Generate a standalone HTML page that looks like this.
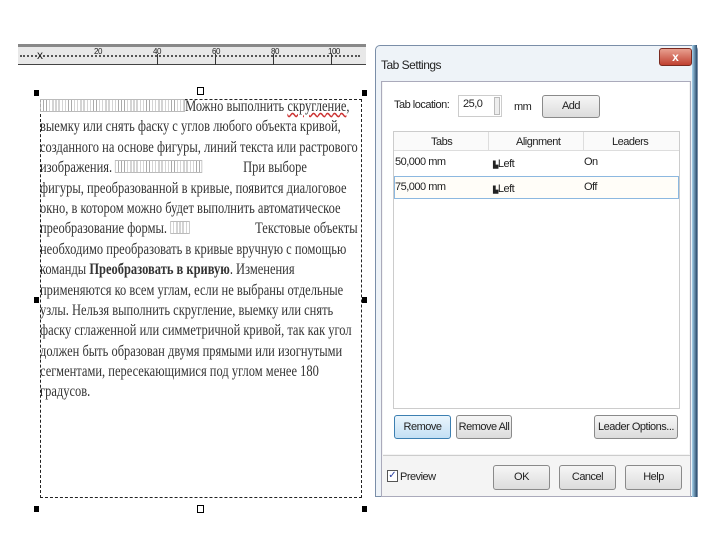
<!DOCTYPE html>
<html><head><meta charset="utf-8"><style>
*{margin:0;padding:0;box-sizing:border-box}
body{width:720px;height:540px;background:#fff;position:relative;overflow:hidden;font-family:"Liberation Sans",sans-serif}
.a{position:absolute}
.txt{font-family:"Liberation Serif","DejaVu Serif",serif;font-size:16px;color:#333;white-space:nowrap;transform:scaleX(0.78);transform-origin:0 0}
.txt div{height:20.4px;line-height:20.4px}
.h{width:5px;height:6px;background:#000}
.btn{position:absolute;border:1px solid #8a8a8a;border-radius:3px;background:linear-gradient(#f6f6f6,#dcdcdc);font-size:11px;color:#222;text-align:center;letter-spacing:-0.5px}
.s{font-size:11px;color:#222;letter-spacing:-0.5px}
.ph{display:inline-block;height:13px;border:1px solid #bbb;background:repeating-linear-gradient(90deg,#fff 0 3px,#aaa 3px 4px);vertical-align:-1px}
</style></head><body>
<!-- ruler -->
<div class="a" style="left:18px;top:44px;width:348px;height:3px;background:#888"></div>
<div class="a" style="left:18px;top:47px;width:348px;height:18px;background:#e8e8e8;border-bottom:1px solid #444"></div>
<div class="a" style="left:20px;top:55px;width:340px;height:2px;border-top:2px dotted #555"></div>
<div class="a s" style="left:94px;top:47px;font-size:8px">20</div>
<div class="a s" style="left:153px;top:47px;font-size:8px">40</div>
<div class="a s" style="left:212px;top:47px;font-size:8px">60</div>
<div class="a s" style="left:271px;top:47px;font-size:8px">80</div>
<div class="a s" style="left:328px;top:47px;font-size:8px">100</div>
<div class="a" style="left:157px;top:54px;width:1px;height:11px;background:#333"></div>
<div class="a" style="left:215px;top:54px;width:1px;height:11px;background:#333"></div>
<div class="a" style="left:273px;top:54px;width:1px;height:11px;background:#333"></div>
<div class="a" style="left:331px;top:54px;width:1px;height:11px;background:#333"></div>
<div class="a s" style="left:37px;top:48px;font-size:12px">x</div>
<!-- frame -->
<div class="a" style="left:40px;top:99px;width:322px;height:399px;border:1px dashed #222"></div>
<div class="a h" style="left:34px;top:90px"></div><div class="a h" style="left:362px;top:90px"></div>
<div class="a h" style="left:34px;top:297px"></div><div class="a h" style="left:362px;top:297px"></div>
<div class="a h" style="left:34px;top:506px"></div><div class="a h" style="left:362px;top:506px"></div>
<div class="a" style="left:197px;top:87px;width:7px;height:8px;border:1px solid #000"></div>
<div class="a" style="left:197px;top:505px;width:7px;height:8px;border:1px solid #000"></div>
<div class="a txt" style="left:40px;top:97px">
<div><span class="ph" style="width:186px"></span>Можно выполнить <u style="text-decoration-color:#c33;text-decoration-style:wavy">скругление</u>,</div>
<div>выемку или снять фаску с углов любого объекта кривой,</div>
<div>созданного на основе фигуры, линий текста или растрового</div>
<div>изображения. <span class="ph" style="width:112px"></span> &nbsp;&nbsp;&nbsp;&nbsp;&nbsp;&nbsp;&nbsp;&nbsp;&nbsp;&nbsp;&nbsp;&nbsp;При выборе</div>
<div>фигуры, преобразованной в кривые, появится диалоговое</div>
<div>окно, в котором можно будет выполнить автоматическое</div>
<div>преобразование формы. <span class="ph" style="width:25px"></span> &nbsp;&nbsp;&nbsp;&nbsp;&nbsp;&nbsp;&nbsp;&nbsp;&nbsp;&nbsp;&nbsp;&nbsp;&nbsp;&nbsp;&nbsp;&nbsp;&nbsp;&nbsp;&nbsp;&nbsp;Текстовые объекты</div>
<div>необходимо преобразовать в кривые вручную с помощью</div>
<div>команды <b>Преобразовать в кривую</b>. Изменения</div>
<div>применяются ко всем углам, если не выбраны отдельные</div>
<div>узлы. Нельзя выполнить скругление, выемку или снять</div>
<div>фаску сглаженной или симметричной кривой, так как угол</div>
<div>должен быть образован двумя прямыми или изогнутыми</div>
<div>сегментами, пересекающимися под углом менее 180</div>
<div>градусов.</div>
</div>
<!-- dialog -->
<div class="a" style="left:375px;top:45px;width:323px;height:452px;background:#eef3f8;border:1px solid #7a8ea8;border-radius:5px 5px 0 0"></div>
<div class="a" style="left:692px;top:45px;width:5px;height:452px;background:linear-gradient(90deg,#a8d4ee,#2a4a6a)"></div>
<div class="a s" style="left:381px;top:58px;font-size:12px">Tab Settings</div>
<div class="a" style="left:659px;top:48px;width:33px;height:18px;background:linear-gradient(#e8a090,#c04030);border:1px solid #7a2a20;border-radius:3px;color:#fff;font-size:12px;font-weight:bold;text-align:center;line-height:16px">x</div>
<div class="a" style="left:381px;top:81px;width:310px;height:416px;background:#f4f4f4;border:1px solid #aab"></div>
<div class="a" style="left:383px;top:82px;width:306px;height:372px;background:#fff"></div>
<div class="a s" style="left:394px;top:99px">Tab location:</div>
<div class="a" style="left:458px;top:95px;width:44px;height:22px;background:#fff;border:1px solid #ccc"></div>
<div class="a s" style="left:463px;top:98px">25,0</div>
<div class="a" style="left:494px;top:97px;width:6px;height:18px;border:1px solid #bbb;background:#eee"></div>
<div class="a s" style="left:514px;top:101px">mm</div>
<div class="btn" style="left:542px;top:95px;width:58px;height:23px;line-height:21px">Add</div>
<div class="a" style="left:393px;top:131px;width:287px;height:278px;border:1px solid #ccc;background:#fff"></div>
<div class="a" style="left:394px;top:132px;width:285px;height:19px;background:#fafafa;border-bottom:1px solid #ddd"></div>
<div class="a" style="left:488px;top:132px;width:1px;height:19px;background:#ddd"></div>
<div class="a" style="left:583px;top:132px;width:1px;height:19px;background:#ddd"></div>
<div class="a s" style="left:431px;top:136px">Tabs</div>
<div class="a s" style="left:516px;top:136px">Alignment</div>
<div class="a s" style="left:612px;top:136px">Leaders</div>
<div class="a s" style="left:395px;top:156px">50,000 mm</div>
<div class="a s" style="left:493px;top:158px"><span style="font-size:7px">▙</span>Left</div>
<div class="a s" style="left:584px;top:156px">On</div>
<div class="a" style="left:394px;top:176px;width:285px;height:23px;border:1px solid #8cb8e0;background:#fffdf8"></div>
<div class="a s" style="left:395px;top:181px">75,000 mm</div>
<div class="a s" style="left:493px;top:183px"><span style="font-size:7px">▙</span>Left</div>
<div class="a s" style="left:584px;top:181px">Off</div>
<div class="btn" style="left:394px;top:415px;width:57px;height:24px;line-height:22px;border-color:#3c7fb1;background:linear-gradient(#eaf6fd,#c4e0f4)">Remove</div>
<div class="btn" style="left:456px;top:415px;width:56px;height:24px;line-height:22px">Remove All</div>
<div class="btn" style="left:594px;top:415px;width:84px;height:24px;line-height:22px">Leader Options...</div>
<div class="a" style="left:383px;top:455px;width:307px;height:1px;background:#ccc"></div>
<div class="a" style="left:387px;top:470px;width:11px;height:12px;border:1px solid #555;background:#fff;color:#2a3fa0;font-size:10px;line-height:10px;text-align:center">✓</div>
<div class="a s" style="left:400px;top:471px">Preview</div>
<div class="btn" style="left:493px;top:465px;width:57px;height:25px;line-height:23px">OK</div>
<div class="btn" style="left:559px;top:465px;width:57px;height:25px;line-height:23px">Cancel</div>
<div class="btn" style="left:625px;top:465px;width:57px;height:25px;line-height:23px">Help</div>
</body></html>
